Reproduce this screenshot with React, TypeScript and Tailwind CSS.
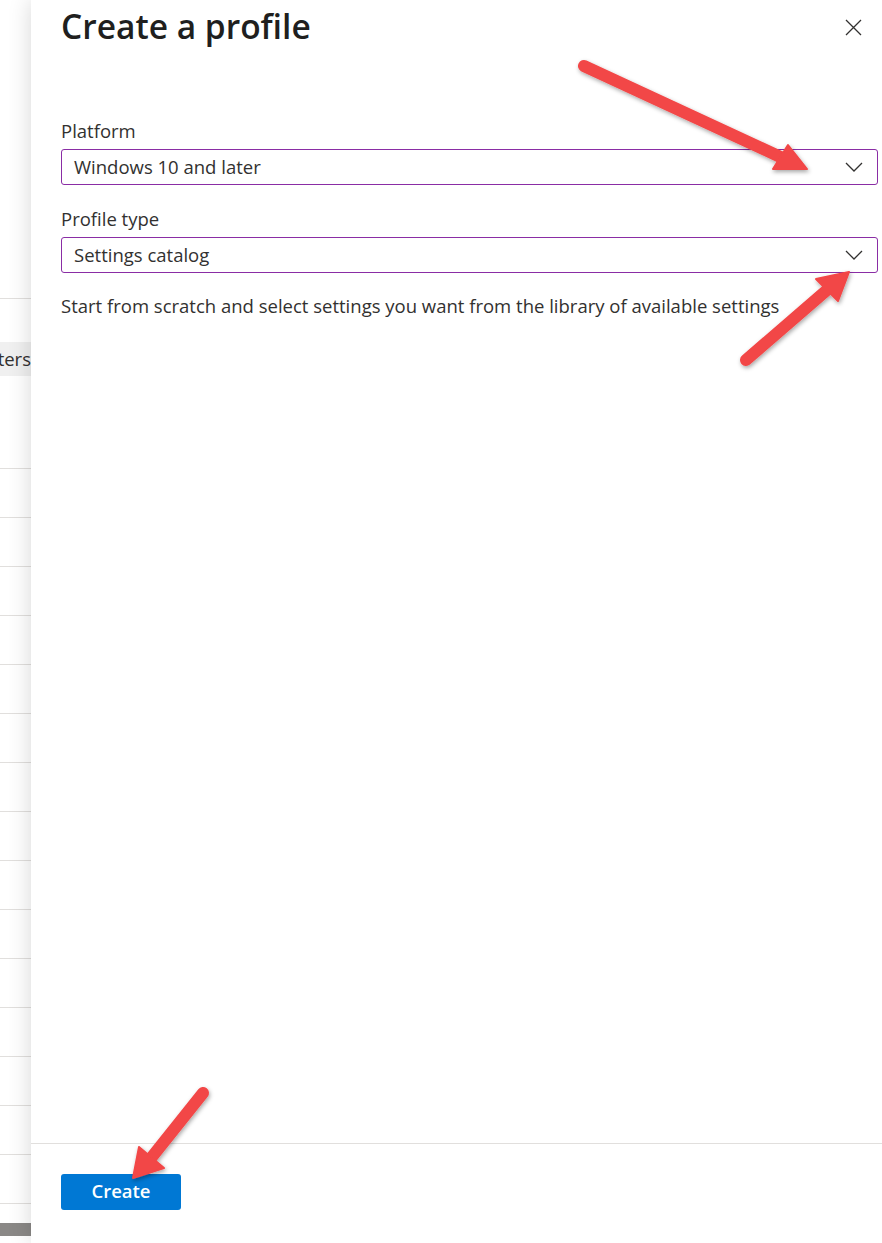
import React from "react";

const font = { fontFamily: "'Open Sans', 'Noto Sans', sans-serif" };

function Chevron() {
  return (
    <svg width="18" height="10" viewBox="0 0 18 10" fill="none">
      <path d="M1 1L9 9L17 1" stroke="#323130" strokeWidth="1.3" />
    </svg>
  );
}

function Select({ value }: { value: string }) {
  return (
    <div className="flex h-[36px] items-center justify-between rounded-[3px] border border-[#8a2da5] pl-[12px] pr-[14px]">
      <span className="text-[18.5px] leading-[24px] text-[#323130]">{value}</span>
      <Chevron />
    </div>
  );
}

function Arrow({ tail, tip, left, right }: { tail: [number, number]; tip: [number, number]; left: [number, number]; right: [number, number] }) {
  const neck: [number, number] = [(left[0] + right[0]) / 2, (left[1] + right[1]) / 2];
  return (
    <g>
      <line x1={tail[0]} y1={tail[1]} x2={neck[0]} y2={neck[1]} stroke="#f24646" strokeWidth="12" strokeLinecap="round" />
      <polygon points={`${tip[0]},${tip[1]} ${left[0]},${left[1]} ${right[0]},${right[1]}`} fill="#f24646" strokeLinejoin="round" stroke="#f24646" strokeWidth="2" />
    </g>
  );
}

export default function App() {
  const rows = Array.from({ length: 15 });
  return (
    <div className="relative flex h-[1243px] w-[882px] overflow-hidden bg-white" style={font}>
      <div className="flex w-[31px] shrink-0 flex-col">
        <div className="h-[299px] border-b border-[#e1dfdd]" />
        <div className="h-[170px] border-b border-[#e1dfdd] pt-[43px]">
          <div className="flex h-[34px] items-center justify-end overflow-hidden bg-[#f0f0f0]">
            <span className="whitespace-nowrap text-[18.5px] text-[#323130]">ters</span>
          </div>
        </div>
        {rows.map((_, i) => (
          <div key={i} className="h-[49px] border-b border-[#e1dfdd]" />
        ))}
        <div className="h-[19px]" />
        <div className="h-[13px] bg-[#8a8886]" />
      </div>
      <div className="relative z-10 flex flex-1 flex-col bg-white shadow-[0_0_22px_rgba(0,0,0,0.16)]">
        <div className="flex items-start justify-between pl-[30px] pr-[20px]">
          <h1 className="mt-[2px] text-[33.5px] font-semibold leading-[48px] text-[#201f1e]">Create a profile</h1>
          <svg className="mt-[19px]" width="17" height="17" viewBox="0 0 17 17" fill="none">
            <path d="M1 1L16 16M16 1L1 16" stroke="#323130" strokeWidth="1.3" />
          </svg>
        </div>
        <div className="flex flex-1 flex-col pl-[30px] pr-[4px] pt-[69px]">
          <label className="mb-[6px] block text-[18.5px] leading-[24px] text-[#323130]">Platform</label>
          <Select value="Windows 10 and later" />
          <label className="mb-[6px] mt-[22px] block text-[18.5px] leading-[24px] text-[#323130]">Profile type</label>
          <Select value="Settings catalog" />
          <p className="mt-[21px] text-[18.5px] leading-[24px] text-[#323130]">
            Start from scratch and select settings you want from the library of available settings
          </p>
        </div>
        <div className="h-[100px] border-t border-[#e1dfdd] pl-[30px] pt-[30px]">
          <button className="flex h-[36px] w-[120px] items-center justify-center rounded-[3px] bg-[#0078d4] pb-[2px] text-[18.5px] font-semibold text-white">
            Create
          </button>
        </div>
      </div>
      <svg className="pointer-events-none absolute left-0 top-0 z-20" width="882" height="1243">
        <defs>
          <filter id="sh" x="-20%" y="-20%" width="140%" height="140%">
            <feDropShadow dx="1" dy="2" stdDeviation="2" floodColor="#000" floodOpacity="0.35" />
          </filter>
        </defs>
        <g filter="url(#sh)">
          <Arrow tail={[584, 66]} tip={[807, 169]} left={[773, 169]} right={[788, 145]} />
          <Arrow tail={[746, 360]} tip={[849, 272]} left={[816, 279]} right={[838, 301]} />
          <Arrow tail={[203, 1093]} tip={[133, 1178]} left={[139, 1147]} right={[164, 1168]} />
        </g>
      </svg>
    </div>
  );
}
